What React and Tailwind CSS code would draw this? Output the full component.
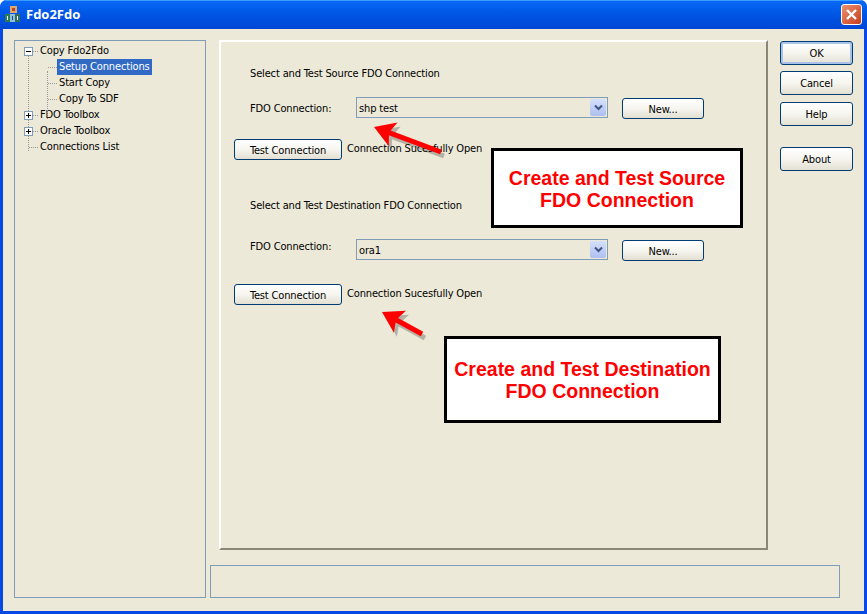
import React from 'react';

const treeItems = [
  { label: 'Copy Fdo2Fdo', box: 'minus', level: 0 },
  { label: 'Setup Connections', level: 1, selected: true },
  { label: 'Start Copy', level: 1 },
  { label: 'Copy To SDF', level: 1 },
  { label: 'FDO Toolbox', box: 'plus', level: 0 },
  { label: 'Oracle Toolbox', box: 'plus', level: 0 },
  { label: 'Connections List', level: 0 },
];

const XpButton = ({ label, className = '', thick = false }) => (
  <button
    className={`flex items-center justify-center rounded-[3px] border border-[#003c74] bg-gradient-to-b from-white via-[#f6f5ef] to-[#e3e0d2] pt-px text-[11px] text-black ${thick ? 'shadow-[inset_0_0_0_2px_#a9c2e8]' : ''} ${className}`}
  >
    <span className="inline-block translate-y-px">{label}</span>
  </button>
);

const Combo = ({ value }) => (
  <div className="flex h-[21px] w-[252px] -translate-y-px items-center justify-between border border-[#7f9db9] pr-px pl-[2px]">
    <span className="translate-y-px pt-px text-[11px] text-black">{value}</span>
    <div className="flex h-[17px] w-[16px] items-center justify-center rounded-[2px] bg-gradient-to-b from-[#d5e0fb] to-[#aebff0]">
      <svg width="9" height="7" viewBox="0 0 9 7">
        <path d="M1 1.5 L4.5 5 L8 1.5" fill="none" stroke="#3f5480" strokeWidth="2" />
      </svg>
    </div>
  </div>
);

const Arrow = ({ className, x1, y1, x2, y2, w, h }) => {
  const a = Math.atan2(y2 - y1, x2 - x1);
  const len = 24;
  const spread = 0.55;
  const p1 = [x2 - len * Math.cos(a - spread), y2 - len * Math.sin(a - spread)];
  const p2 = [x2 - len * Math.cos(a + spread), y2 - len * Math.sin(a + spread)];
  const m = [x2 - 16 * Math.cos(a), y2 - 16 * Math.sin(a)];
  const points = `${x2},${y2} ${p1.join(',')} ${m.join(',')} ${p2.join(',')}`;
  return (
    <svg className={className} width={w} height={h} viewBox={`0 0 ${w} ${h}`}>
      <g transform="translate(3 4)" opacity="0.3">
        <line x1={x1} y1={y1} x2={m[0]} y2={m[1]} stroke="#333" strokeWidth="5" />
        <polygon points={points} fill="#333" />
      </g>
      <line x1={x1} y1={y1} x2={m[0]} y2={m[1]} stroke="#ff0000" strokeWidth="5" />
      <polygon points={points} fill="#ff0000" />
    </svg>
  );
};

const Callout = ({ lines, className }) => (
  <div className={`absolute flex flex-col items-center justify-center border-[3px] border-black bg-white text-[19.5px] leading-[22px] font-bold tracking-normal text-[#ff0000] [font-family:'Liberation_Sans',sans-serif] ${className}`}>
    {lines.map((l) => (
      <div key={l}>{l}</div>
    ))}
  </div>
);

const TreeBox = ({ type }) => (
  <div className="relative z-10 flex h-[9px] w-[9px] items-center justify-center border border-[#7f9db9] bg-white">
    <div className="h-px w-[5px] bg-black" />
    {type === 'plus' && <div className="absolute h-[5px] w-px bg-black" />}
  </div>
);

const Tree = () => (
  <div className="relative h-[558px] w-[192px] border border-[#7f9db9] pt-[2px] pl-[9px]">
    <div className="absolute top-[14px] left-[13px] h-[96px] border-l border-dotted border-[#999]" />
    <div className="absolute top-[30px] left-[32px] h-[48px] border-l border-dotted border-[#999]" />
    {treeItems.map((item) => (
      <div key={item.label} className="flex h-[16px] items-center">
        {item.level === 1 && <div className="w-[24px]" />}
        {item.level === 0 && !item.box && <div className="w-[5px]" />}
        {item.box && <TreeBox type={item.box} />}
        <div className={`h-0 border-t border-dotted border-[#999] ${item.box ? 'w-[5px]' : 'w-[9px]'}`} />
        <span className={`px-[2px] text-[11px] leading-[16px] ${item.selected ? 'bg-[#316ac5] text-white' : 'text-black'}`}>
          {item.label}
        </span>
      </div>
    ))}
  </div>
);

const Panel = () => (
  <div className="relative h-[510px] w-[549px] border-2 border-t-white border-r-[#8a8778] border-b-[#8a8778] border-l-white pt-[25px]">
    <div className="ml-[29px] text-[11px] leading-[14px] text-black">Select and Test Source FDO Connection</div>
    <div className="mt-[17px] ml-[29px] flex items-center">
      <span className="w-[106px] pt-[2px] text-[11px] text-black">FDO Connection:</span>
      <Combo value="shp test" />
      <XpButton label="New..." className="ml-[14px] h-[21px] w-[82px]" />
    </div>
    <div className="mt-[20px] ml-[13px] flex items-center">
      <XpButton label="Test Connection" className="h-[21px] w-[108px]" />
      <span className="ml-[5px] text-[11px] text-black">Connection Sucesfully Open</span>
    </div>
    <div className="mt-[39px] ml-[29px] text-[11px] leading-[14px] text-black">Select and Test Destination FDO Connection</div>
    <div className="mt-[27px] ml-[29px] flex items-center">
      <span className="w-[106px] -translate-y-[3px] text-[11px] text-black">FDO Connection:</span>
      <Combo value="ora1" />
      <XpButton label="New..." className="ml-[14px] h-[21px] w-[82px]" />
    </div>
    <div className="mt-[23px] ml-[13px] flex items-center">
      <XpButton label="Test Connection" className="h-[21px] w-[108px]" />
      <span className="ml-[5px] text-[11px] text-black">Connection Sucesfully Open</span>
    </div>

    <Callout lines={['Create and Test Source', 'FDO Connection']} className="top-[106px] left-[270px] h-[80px] w-[252px] pt-[2px]" />
    <Callout lines={['Create and Test Destination', 'FDO Connection']} className="top-[294px] left-[223px] h-[87px] w-[277px]" />
    <Arrow className="absolute top-[80px] left-[150px]" w={80} h={40} x1={70} y1={30} x2={3} y2={5} />
    <Arrow className="absolute top-[267px] left-[158px]" w={60} h={40} x1={43} y1={25} x2={3} y2={3} />
  </div>
);

export default function App() {
  return (
    <div className="flex h-[614px] w-[867px] flex-col overflow-hidden rounded-t-[7px] bg-[#0848e4] tracking-[-0.15px] [font-family:'DejaVu_Sans_Condensed','DejaVu_Sans',sans-serif]">
      <div className="flex h-[29px] items-center justify-between bg-gradient-to-b from-[#0a6af5] via-[#0055e5] to-[#0046d5] px-[5px] shadow-[inset_0_1px_0_#3b9cff]">
        <div className="flex items-center gap-[5px]">
          <svg width="16" height="17" viewBox="0 0 16 17">
            <rect x="5" y="0" width="7" height="7" fill="#e0a868" />
            <rect x="7" y="2" width="3" height="3" fill="#b5452f" />
            <rect x="0" y="8" width="5" height="8" fill="#2e7d4f" />
            <rect x="5" y="8" width="5" height="8" fill="#8fbfe0" />
            <rect x="10" y="8" width="5" height="8" fill="#2f6f59" />
            <rect x="2" y="10" width="1" height="4" fill="#fff" />
            <rect x="7" y="10" width="1" height="4" fill="#1d4f80" />
            <rect x="12" y="10" width="1" height="4" fill="#fff" />
          </svg>
          <span className="text-[13px] font-bold tracking-normal text-white [font-family:'Open_Sans',sans-serif]">Fdo2Fdo</span>
        </div>
        <div className="flex h-[21px] w-[21px] items-center justify-center rounded-[3px] border border-white bg-gradient-to-br from-[#e8916f] to-[#c7391a]">
          <svg width="13" height="13" viewBox="0 0 13 13">
            <path d="M2 2 L11 11 M11 2 L2 11" stroke="#fff" strokeWidth="2.4" />
          </svg>
        </div>
      </div>
      <div className="mr-[3px] mb-[3px] ml-[3px] flex flex-1 bg-[#ece9d8] pt-[11px] pl-[11px]">
        <Tree />
        <div className="ml-[4px] flex flex-col">
          <div className="flex">
            <div className="ml-[9px]">
              <Panel />
            </div>
            <div className="mt-[1px] ml-[12px] flex flex-col">
              <XpButton label="OK" thick className="h-[24px] w-[73px]" />
              <XpButton label="Cancel" className="mt-[6px] h-[24px] w-[73px]" />
              <XpButton label="Help" className="mt-[7px] h-[24px] w-[73px]" />
              <XpButton label="About" className="mt-[21px] h-[24px] w-[73px]" />
            </div>
          </div>
          <div className="mt-[15px] h-[33px] w-[630px] border border-[#7f9db9]" />
        </div>
      </div>
    </div>
  );
}
